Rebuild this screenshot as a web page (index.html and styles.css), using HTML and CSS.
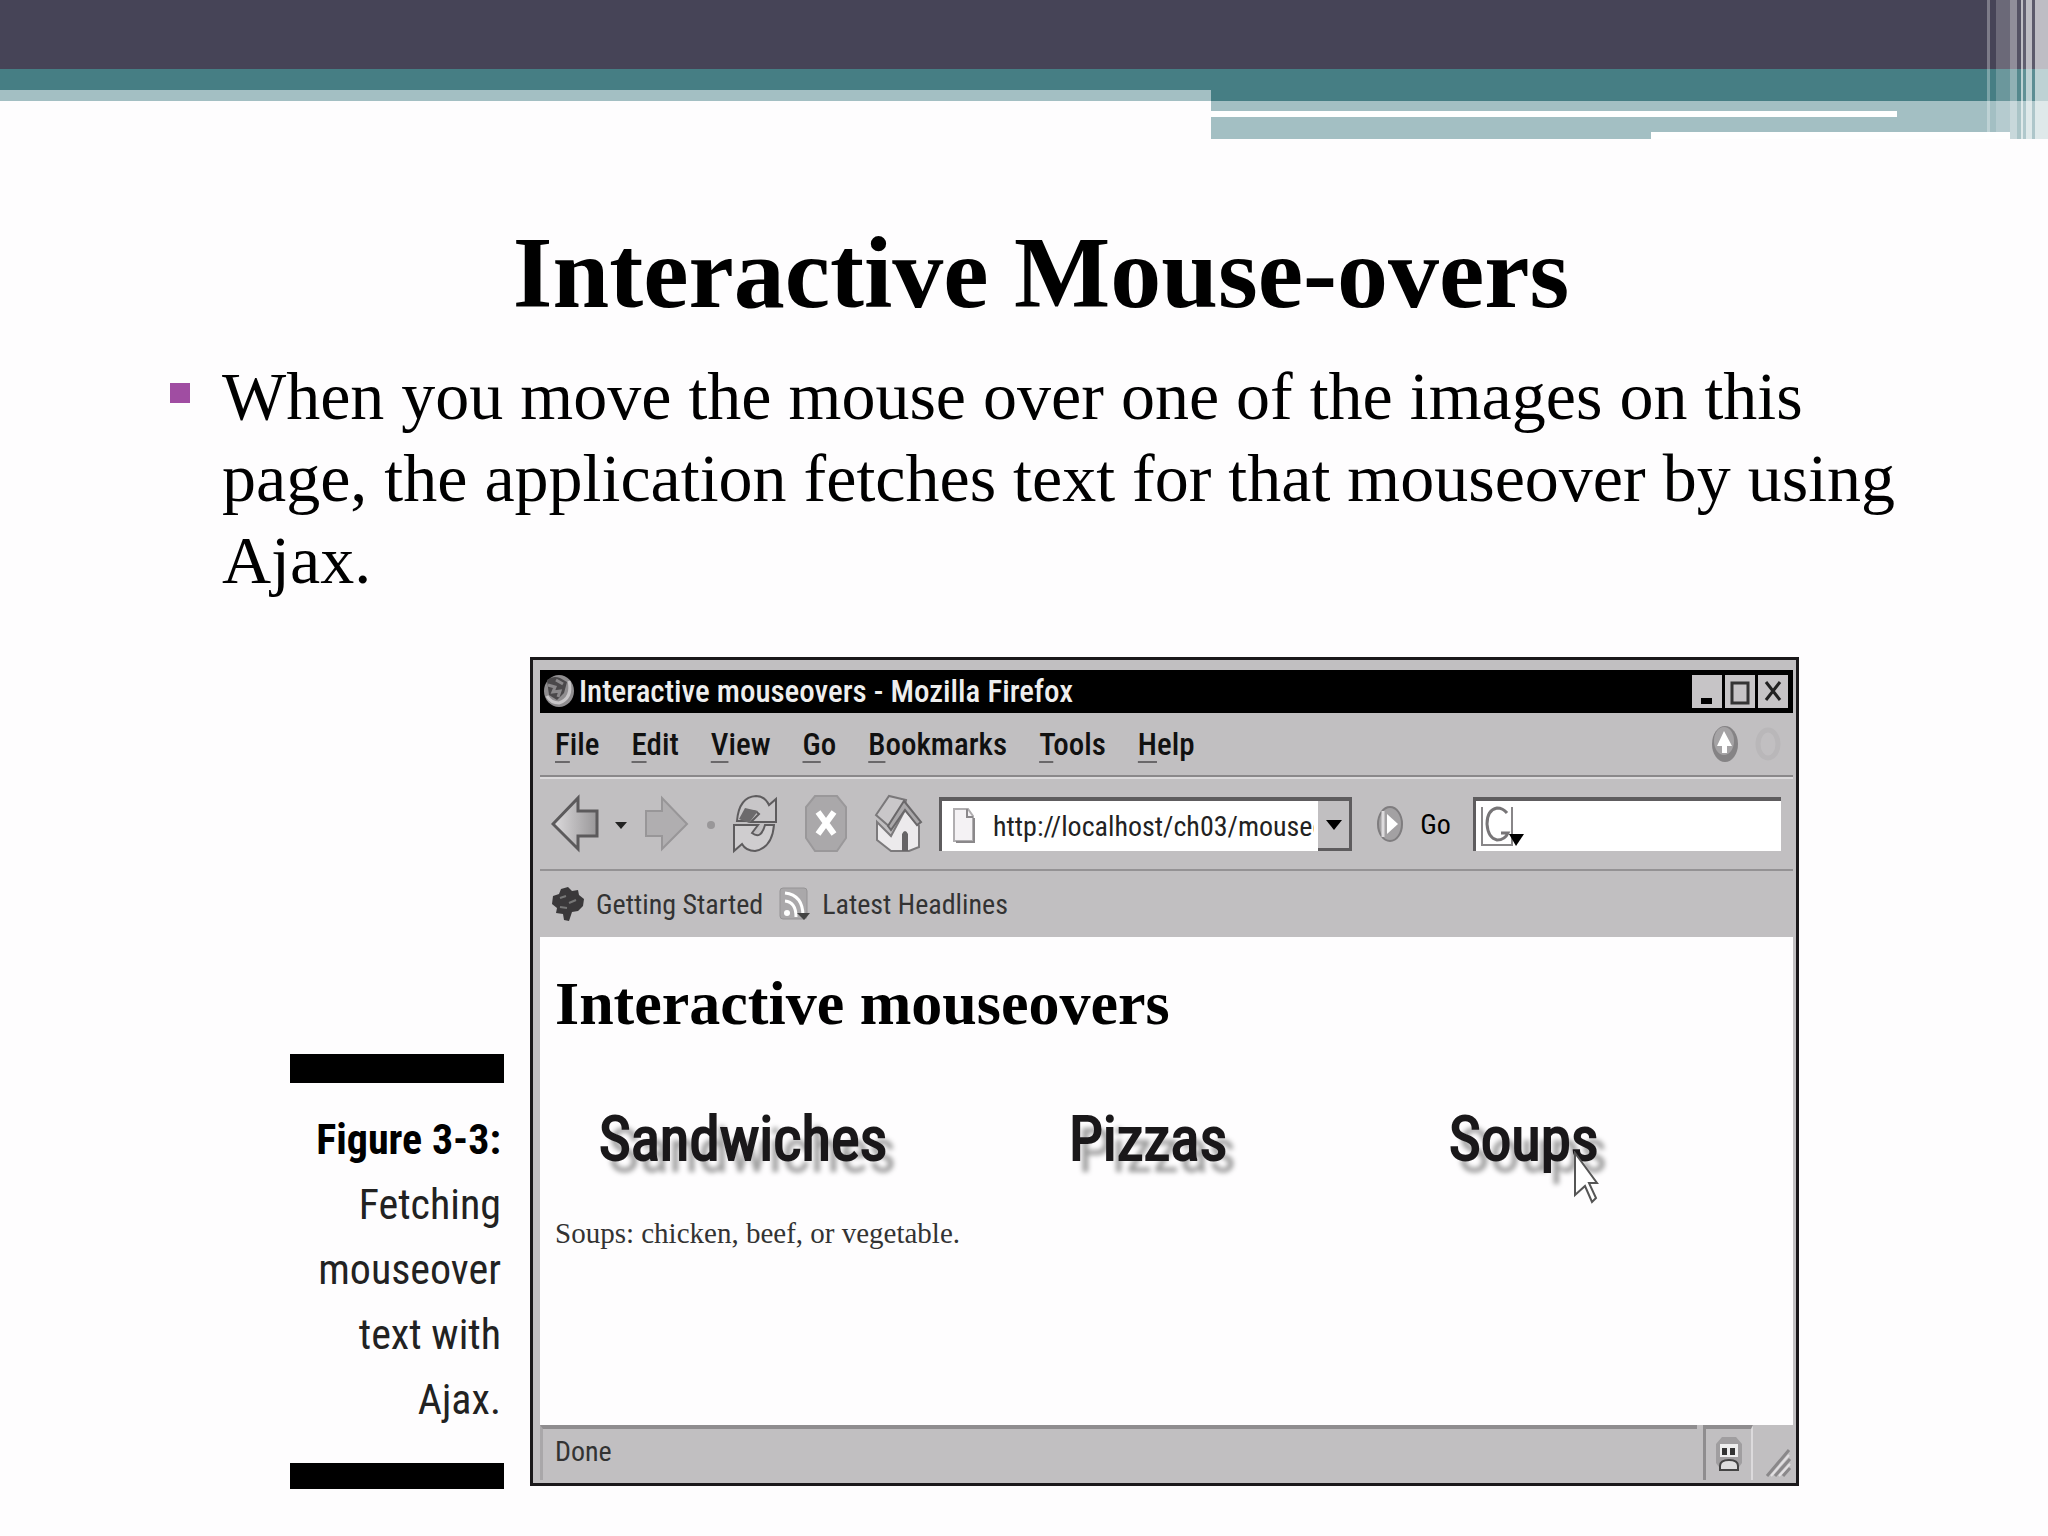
FILE: index.html
```
<!DOCTYPE html>
<html lang="en">
  <head>
    <meta charset="utf-8">
    <title>Interactive Mouse-overs</title>
    <link rel="stylesheet" href="styles.css">
  </head>
  <body>
    <header class="banner"> <!-- Coloured bars along the top -->
      <div class="bar-dark"></div>
      <div class="bar-row">
        <div class="bar-left"></div>
        <div class="bar-right">
          <div class="bar-line"></div>
          <div class="bar-step"></div>
        </div>
      </div>
      <svg class="stripes" width="61" height="139" viewBox="0 0 61 139" fill="#fff">
        <rect x="0" width="3" height="132" opacity=".3"/>
        <rect x="9" width="14" height="132" opacity=".2"/>
        <rect x="23" width="7" height="139" opacity=".4"/>
        <rect x="30" width="4" height="139" opacity=".08"/>
        <rect x="34" width="2" height="139" opacity=".65"/>
        <rect x="36" width="3" height="139" opacity=".15"/>
        <rect x="39" width="6" height="139" opacity=".65"/>
        <rect x="45" width="3" height="139" opacity=".12"/>
        <rect x="48" width="13" height="139" opacity=".65"/>
      </svg>
    </header>

    <main class="slide">
      <h1>Interactive Mouse-overs</h1>
      <ul class="points">
        <li>When you move the mouse over one of the images on this page, the application fetches text for that mouseover by using Ajax.</li>
      </ul>

      <figure class="figure">
        <figcaption class="caption">
          <strong>Figure 3-3:</strong> Fetching mouseover text with Ajax.
        </figcaption>

        <div class="window">
          <div class="title-bar">
            <svg width="32" height="34" viewBox="0 0 32 34">
              <ellipse cx="16" cy="16" rx="15" ry="16" fill="#8f8d8f"/>
              <path d="M4 5 Q10 0 17 3 L24 7 L21 18 L14 25 L6 20 Z" fill="#4a484a"/>
              <path d="M5 10 L12 12 L10 17 L17 16 L15 22 M13 5 L20 9" stroke="#8a888a" stroke-width="3" fill="none"/>
              <path d="M26 6 Q30 23 16 28 Q8 28 4 21" stroke="#c8c6c8" stroke-width="3" fill="none"/>
            </svg>
            <span class="title-text">Interactive mouseovers - Mozilla Firefox</span>
            <div class="window-buttons">
              <button type="button" aria-label="Minimize"><svg width="30" height="33" viewBox="0 0 30 33"><rect x="9" y="23" width="11" height="6"/></svg></button>
              <button type="button" aria-label="Maximize"><svg width="30" height="33" viewBox="0 0 30 33"><rect x="7" y="8" width="16" height="20" fill="none" stroke="#333" stroke-width="3"/></svg></button>
              <button type="button" aria-label="Close"><svg width="30" height="33" viewBox="0 0 30 33"><path d="M8 7 L22 25 M22 7 L8 25" stroke="#222" stroke-width="3"/></svg></button>
            </div>
          </div>

          <nav class="menu-bar">
            <button type="button"><u>F</u>ile</button>
            <button type="button"><u>E</u>dit</button>
            <button type="button"><u>V</u>iew</button>
            <button type="button"><u>G</u>o</button>
            <button type="button"><u>B</u>ookmarks</button>
            <button type="button"><u>T</u>ools</button>
            <button type="button"><u>H</u>elp</button>
            <svg class="throbber" width="76" height="42" viewBox="0 0 76 42">
              <ellipse cx="16" cy="21" rx="13" ry="18" fill="#858385"/>
              <ellipse cx="15" cy="18" rx="10" ry="14" fill="#a5a3a5"/>
              <path d="M15 8 L23 23 H18 V30 H13 V23 H8 Z" fill="#fff"/>
              <ellipse cx="59" cy="21" rx="10" ry="14" fill="none" stroke="#b9b7b9" stroke-width="5"/>
            </svg>
          </nav>

          <div class="toolbar">
            <button type="button" class="tool" aria-label="Back">
              <svg width="78" height="60" viewBox="0 0 78 60">
                <defs>
                  <linearGradient id="arrow-fill">
                    <stop offset="0" stop-color="#dddbdd"/>
                    <stop offset="1" stop-color="#999799"/>
                  </linearGradient>
                </defs>
                <path d="M2 30 L27 4 V17 H46 V42 H27 V55 Z" fill="url(#arrow-fill)" stroke="#5c5a5c" stroke-width="3"/>
                <path d="M64 28 H76 L70 35 Z" fill="#222"/>
              </svg>
            </button>
            <button type="button" class="tool arrow" aria-label="Forward">
              <svg width="74" height="60" viewBox="0 0 74 60">
                <path d="M44 30 L19 4 V17 H3 V42 H19 V55 Z" fill="#b0aeb0" stroke="#989698" stroke-width="2"/>
                <circle cx="68" cy="31" r="4" fill="#999799"/>
              </svg>
            </button>
            <button type="button" class="tool arrow" aria-label="Reload">
              <svg width="48" height="60" viewBox="0 0 48 60">
                <path d="M6 27 Q8 3 25 2 Q34 2 38 11 L45 5 V28 H20 L28 20 Q20 12 15 27 Z" fill="#c8c6c8" stroke="#5e5c5e" stroke-width="2"/>
                <path d="M8 25 L14 14 L27 17 L18 29 Z" fill="#6c6a6c"/>
                <path d="M43 31 Q41 54 24 57 Q15 57 11 50 L3 57 V31 H27 L21 39 Q30 46 34 31 Z" fill="#cfcdcf" stroke="#5e5c5e" stroke-width="2"/>
              </svg>
            </button>
            <button type="button" class="tool" aria-label="Stop">
              <svg width="44" height="60" viewBox="0 0 44 60">
                <path d="M11 2 H33 L42 13 V44 L33 57 H11 L2 44 V13 Z" fill="#aaa8aa" stroke="#9a989a" stroke-width="2"/>
                <path d="M14 18 L30 40 M30 18 L14 40" stroke="#fff" stroke-width="6"/>
              </svg>
            </button>
            <button type="button" class="tool" aria-label="Home">
              <svg width="50" height="60" viewBox="0 0 50 60">
                <path d="M4 28 L18 42 L32 16 L46 32 V53 L36 57 H18 L4 46 Z" fill="#eceaec" stroke="#7c7a7c" stroke-width="2"/>
                <path d="M3 21 L16 2 L33 6 L31 16 L18 34 Z" fill="#c9c7c9" stroke="#7a787a" stroke-width="2"/>
                <path d="M31 7 L48 28 L44 31 L32 16 L18 36 L15 32 Z" fill="#aaa8aa" stroke="#6a686a" stroke-width="2"/>
                <path d="M29 57 V40 Q32 34 35 40 V57 Z" fill="#666466"/>
              </svg>
            </button>
            <div class="address">
              <svg width="22" height="36" viewBox="0 0 22 36">
                <path d="M1 1 H15 L20 8 V33 H1 Z" fill="#f4f2f4" stroke="#b0aeb0" stroke-width="2"/>
                <path d="M14 1 V9 H20 M3 34 H21 V10" fill="none" stroke="#8a888a" stroke-width="2"/>
              </svg>
              <input type="text" aria-label="Address" value="http://localhost/ch03/mouseovers.html">
              <button type="button" aria-label="Show history"><svg width="16" height="12" viewBox="0 0 16 12"><path d="M0 1 H16 L8 11 Z"/></svg></button>
            </div>
            <button type="button" class="go">
              <svg width="28" height="38" viewBox="0 0 28 38">
                <ellipse cx="14" cy="19" rx="12" ry="17" fill="#a3a1a3" stroke="#7f7d7f" stroke-width="2"/>
                <path d="M7 6 V32" stroke="#dddbdd" stroke-width="3"/>
                <path d="M11 9 L22 19 L11 29 Z" fill="#fff"/>
              </svg>
              Go
            </button>
            <div class="search">
              <svg width="44" height="44" viewBox="0 0 44 44">
                <path d="M1 3 V41 H31 V3" fill="none" stroke="#888688" stroke-width="2"/>
                <path d="M26 9 Q22 4 16 4 Q6 6 6 20 Q7 34 16 36 Q24 36 27 29 H20" fill="none" stroke="#777577" stroke-width="3"/>
                <path d="M28 30 H43 L35 42 Z"/>
              </svg>
              <input type="text" aria-label="Search">
            </div>
          </div>

          <div class="bookmarks">
            <a href="#">
              <svg width="34" height="36" viewBox="0 0 34 36">
                <path d="M2 10 L8 8 L10 3 L17 1 L21 5 L27 4 L28 9 L33 13 L32 20 L27 25 L21 26 L18 35 L13 34 L12 28 L5 27 L6 22 L1 18 Z" fill="#3a383a"/>
                <path d="M9 12 L15 10 M18 17 L25 14 M9 21 L16 22" stroke="#777" stroke-width="2"/>
              </svg>
              Getting Started
            </a>
            <a href="#">
              <svg width="32" height="36" viewBox="0 0 32 36">
                <rect x="1" y="2" width="27" height="31" rx="3" fill="#aaa8aa" stroke="#959395"/>
                <path d="M6 15 Q17 16 17 31 M6 7 Q24 9 24 30" fill="none" stroke="#fff" stroke-width="3"/>
                <circle cx="8" cy="27" r="3" fill="#fff"/>
                <path d="M18 27 H31 L25 34 Z" fill="#444"/>
              </svg>
              Latest Headlines
            </a>
          </div>

          <div class="page"> <!-- The web page inside the browser -->
            <h2>Interactive mouseovers</h2>
            <div class="images">
              <span>Sandwiches</span>
              <span>Pizzas</span>
              <span class="hovered">Soups
                <svg class="pointer" width="28" height="54" viewBox="0 0 28 54">
                  <path d="M2 2 L24 32 H16 L23 47 L19 51 L12 35 L2 44 Z" fill="#fff" stroke="#555" stroke-width="2"/>
                </svg>
              </span>
            </div>
            <p>Soups: chicken, beef, or vegetable.</p>
          </div>

          <div class="status-bar">
            <span class="status-text">Done</span>
            <span class="status-icon">
              <svg width="28" height="38" viewBox="0 0 28 38">
                <path d="M7 2 H21 L27 9 V28 L21 36 H7 L1 28 V9 Z" fill="#a09ea0"/>
                <rect x="5" y="9" width="18" height="13" fill="#eee"/>
                <rect x="7" y="13" width="5" height="7" fill="#333"/>
                <rect x="15" y="13" width="5" height="7" fill="#333"/>
                <path d="M5 31 Q5 25 14 25 Q23 25 23 31 V35 H5 Z" fill="#ddd" stroke="#444" stroke-width="2"/>
              </svg>
            </span>
            <svg class="grip" width="40" height="40" viewBox="0 14 40 40">
              <path d="M14 50 L36 24 M22 50 L37 33 M30 50 L37 42" stroke="#8a888a" stroke-width="3"/>
              <path d="M18 50 L36 29 M26 50 L37 38" stroke="#e2e0e2" stroke-width="2"/>
            </svg>
          </div>
        </div>
      </figure>
    </main>
  </body>
</html>
```

FILE: styles.css
```
/* Slide */
* {
  box-sizing: border-box;
}

body {
  margin: 0;
  min-height: 100vh;
  background-color: #fefdfe;
  color: #000;
  font-family: "Liberation Serif", "Times New Roman", serif;
}

/* Banner bars */
.banner {
  position: relative;
}

.bar-dark {
  height: 69px;
  background-color: #464457; /* Slate */
}

.bar-row {
  display: flex;
  height: 70px;
}

.bar-left {
  width: 1211px;
  height: 32px;
  background-color: #a3bfc3; /* Pale teal */
  border-top: 21px solid #467e84;
}

.bar-right {
  flex: 1;
  display: flex;
  flex-direction: column;
  justify-content: space-between;
  background-color: #a3bfc3;
  border-top: 32px solid #467e84;
}

.bar-line {
  height: 6px;
  margin-top: 10px;
  margin-right: 151px;
  background-color: #fff;
}

.bar-step {
  height: 7px;
  margin-left: 440px;
  margin-right: 38px;
  background-color: #fff;
}

.stripes {
  position: absolute;
  top: 0;
  right: 0;
}

/* Slide text */
h1 {
  margin: 0;
  padding-top: 76px;
  padding-left: 34px;
  font-size: 102px;
  line-height: 116px;
  text-align: center;
}

.points {
  list-style: none;
  margin: 24px 140px 0 170px;
  padding: 0;
  font-size: 68px;
  line-height: 82px;
}

.points li {
  display: flex;
}

.points li::before { /* Square bullet */
  content: "";
  flex: none;
  width: 20px;
  height: 20px;
  margin: 28px 32px 0 0;
  background-color: #a04da2;
}

/* Figure and caption */
.figure {
  display: flex;
  align-items: flex-end;
  gap: 26px;
  margin: 56px 249px 0 290px;
  font-family: "Roboto Condensed", "Liberation Sans Narrow", "Liberation Sans", Arial, sans-serif;
  font-size: 28px;
}

.caption {
  width: 214px;
  padding: 24px 3px 31px 20px;
  border-top: 29px solid #000;
  border-bottom: 26px solid #000;
  font-size: 42px;
  line-height: 65px;
  text-align: right;
  color: #222;
}

.caption strong {
  display: block;
  white-space: nowrap;
  color: #000;
}

/* Browser window */
.window {
  flex: 1;
  min-width: 0;
  margin-bottom: 3px;
  padding: 10px 3px 3px 7px;
  border: 3px solid #1a181a;
  background-color: #c1bfc1;
}

.window button {
  font: inherit;
  color: inherit;
  background: none;
  border: none;
  padding: 0;
}

.window svg {
  display: block;
  flex: none;
}

.title-bar {
  display: flex;
  align-items: center;
  gap: 4px;
  height: 43px;
  padding: 0 5px 0 3px;
  background-color: #000;
  color: #eee;
  font-size: 31px;
  font-weight: 500;
}

.title-text {
  flex: 1;
}

.window-buttons {
  display: flex;
  gap: 3px;
}

.window-buttons button {
  background-color: #c6c4c6;
}

.menu-bar {
  display: flex;
  align-items: center;
  gap: 32px;
  height: 64px;
  padding: 0 8px 0 15px;
  border-bottom: 2px solid #8a888a;
  color: #111;
  font-size: 31px;
  font-weight: 500;
}

.menu-bar u {
  text-decoration-color: #6a686a;
  text-decoration-thickness: 2px;
  text-underline-offset: 6px;
}

.throbber {
  margin-left: auto;
}

.toolbar {
  display: flex;
  align-items: center;
  height: 94px;
  padding: 0 12px 0 11px;
  border-top: 2px solid #dcdadc;
  border-bottom: 2px solid #949294;
}

.tool + .tool {
  margin-left: 25px;
}

.tool + .arrow {
  margin-left: 14px;
}

.address,
.search {
  display: flex;
  align-items: center;
  min-width: 0;
  height: 54px;
  border-top: 4px solid #5e5c5e;
  border-left: 3px solid #5e5c5e;
  background-color: #fff;
}

.address {
  flex: 411;
  margin-left: 16px;
  padding-left: 11px;
}

.address input,
.search input {
  flex: 1;
  width: 0;
  min-width: 0;
  padding: 0;
  border: none;
  background: none;
  font: inherit;
  color: #222;
}

.address input {
  margin-left: 18px;
}

.address button {
  display: flex;
  align-items: center;
  justify-content: center;
  width: 34px;
  height: 50px;
  margin-left: 4px;
  border: solid #5e5c5e;
  border-width: 0 3px 3px 0;
  background-color: #c1bfc1;
}

.window .go {
  display: flex;
  align-items: center;
  gap: 16px;
  margin: 0 22px 0 24px;
}

.search {
  flex: 309;
  padding-left: 5px;
}

.bookmarks {
  display: flex;
  align-items: center;
  gap: 16px;
  height: 66px;
  padding-left: 11px;
}

.bookmarks a {
  display: flex;
  align-items: center;
  gap: 11px;
  color: #333;
  text-decoration: none;
}

/* Page shown in the browser */
.page {
  height: 488px;
  padding: 28px 15px 0;
  background-color: #fefdfe;
  font-family: "Liberation Serif", "Times New Roman", serif;
}

.page h2 {
  margin: 0;
  font-size: 62px;
  line-height: 76px;
}

.images {
  display: grid;
  grid-template-columns: 470fr 380fr 329fr;
  margin: 60px 0 0 44px;
  font-family: "Roboto Condensed", "Liberation Sans Narrow", "Liberation Sans", Arial, sans-serif;
  font-size: 61px;
  line-height: 76px;
  color: #1a181a;
  text-shadow: 9px 12px 5px #999;
  -webkit-text-stroke: 2px #1a181a;
}

.hovered {
  position: relative;
}

.pointer {
  position: absolute;
  left: 124px;
  top: 50px;
}

.page p {
  margin: 36px 0 0;
  font-size: 29px;
  line-height: 40px;
  color: #333;
}

.status-bar {
  display: flex;
  height: 55px;
  color: #333;
}

.status-text {
  flex: 1;
  padding: 6px 0 0 12px;
  border-top: 4px solid #8f8d8f;
  border-left: 3px solid #a9a7a9;
}

.status-icon {
  width: 50px;
  margin-left: 6px;
  padding: 6px 0 0 9px;
  border-top: 4px solid #8f8d8f;
  border-left: 3px solid #8f8d8f;
  border-right: 2px solid #dcdadc;
}

.grip {
  align-self: flex-end;
}
```
